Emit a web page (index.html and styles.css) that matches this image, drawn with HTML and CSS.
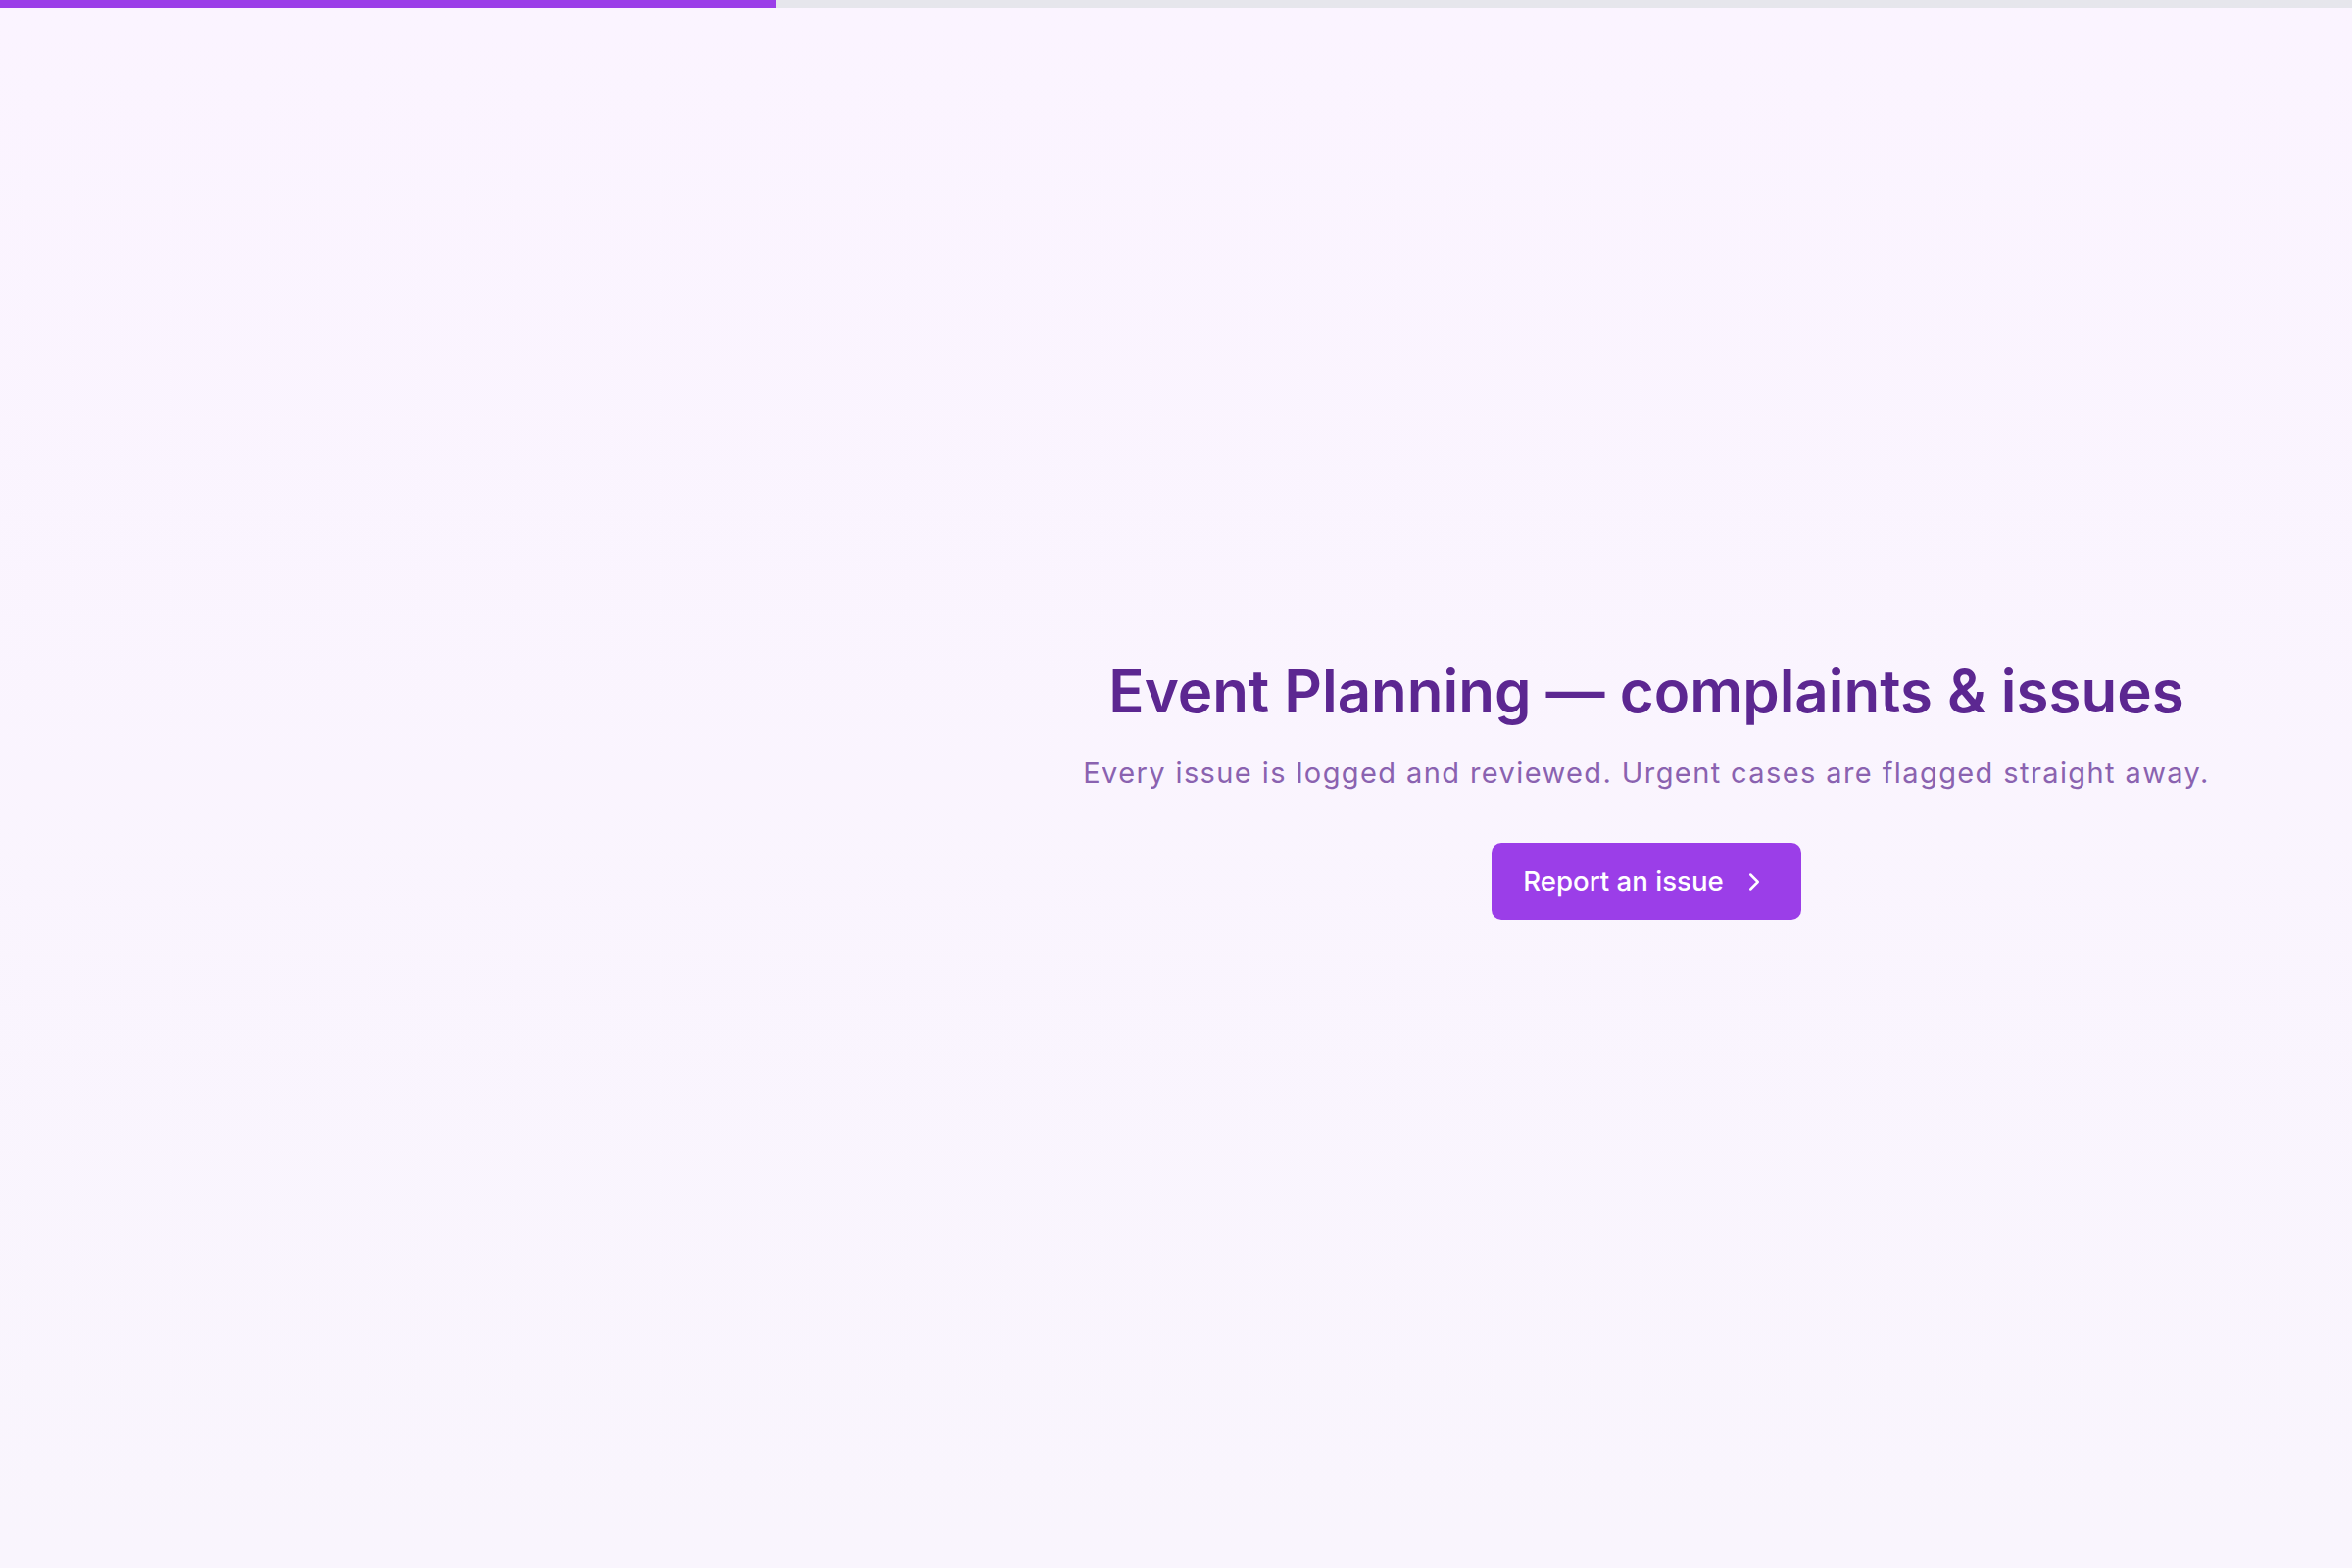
FILE: index.html
```html
<!DOCTYPE html>
<html lang="en">
<head>
<meta charset="utf-8">
<title>Event Planning — complaints &amp; issues</title>
<link rel="stylesheet" href="styles.css">
</head>
<body>
<div class="progress"><div class="progress-fill" style="width:33%"></div></div>
<main class="layout">
  <aside class="side"></aside>
  <section class="hero">
    <h1 class="title">Event Planning — complaints &amp; issues</h1>
    <p class="subtitle">Every issue is logged and reviewed. Urgent cases are flagged straight away.</p>
    <button class="cta" type="button">
      <span>Report an issue</span>
      <svg class="cta-icon" viewBox="0 0 24 24" fill="none" stroke="currentColor" stroke-width="2" stroke-linecap="round" stroke-linejoin="round"><path d="m9 18 6-6-6-6"/></svg>
    </button>
  </section>
</main>
</body>
</html>
```
FILE: styles.css
```css
* { box-sizing: border-box; }
html, body { height: 100%; }
body {
  margin: 0;
  font-family: Inter, "Noto Sans", "Liberation Sans", sans-serif;
  background: linear-gradient(180deg, #fbf4ff 0%, #f9f5fd 100%);
  display: flex;
  flex-direction: column;
  min-height: 100vh;
}
.progress {
  height: 8px;
  background: #e6e6ec;
  flex: none;
}
.progress-fill {
  height: 100%;
  background: #9b3ee8;
}
.layout {
  flex: 1;
  display: grid;
  grid-template-columns: 960px 1fr;
}
.hero {
  display: flex;
  flex-direction: column;
  align-items: center;
  justify-content: center;
  text-align: center;
}
.title {
  margin: 0;
  font-size: 60px;
  line-height: 72px;
  font-weight: 600;
  color: #5c2791;
  letter-spacing: 0;
}
.subtitle {
  margin: 26px 0 0;
  font-size: 29px;
  line-height: 43px;
  color: #8a62b0;
  letter-spacing: 1.4px;
}
.cta {
  margin-top: 50px;
  display: inline-flex;
  align-items: center;
  gap: 16px;
  padding: 18px 33px 18px 32px;
  background: #9b3ee8;
  color: #ffffff;
  border: 0;
  border-radius: 10px;
  font-family: inherit;
  font-size: 27.6px;
  line-height: 43px;
  font-weight: 500;
}
.cta-icon { width: 30px; height: 30px; }
```
